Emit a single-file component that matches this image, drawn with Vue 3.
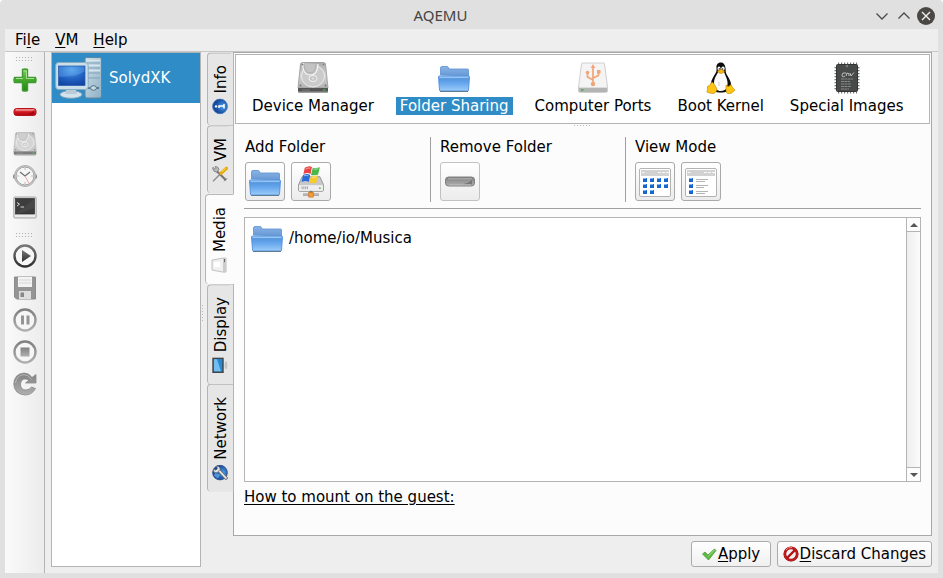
<script setup>
import { ref } from 'vue'

const tools = [
  { id: 'plus', label: 'Add VM' },
  { id: 'minus', label: 'Delete VM' },
  { id: 'hdd', label: 'Create disk image', dim: true },
  { id: 'clock', label: 'Snapshots', dim: true },
  { id: 'terminal', label: 'Emulator control' },
]
const controls = [
  { id: 'play', label: 'Start' },
  { id: 'floppy', label: 'Save' },
  { id: 'pause', label: 'Pause' },
  { id: 'stop', label: 'Stop' },
  { id: 'reset', label: 'Reset' },
]
const tabs = [
  { id: 'info', label: 'Info' },
  { id: 'tools', label: 'VM' },
  { id: 'media', label: 'Media' },
  { id: 'display', label: 'Display' },
  { id: 'network', label: 'Network' },
]
const pages = [
  { id: 'hdd', label: 'Device Manager' },
  { id: 'folder', label: 'Folder Sharing' },
  { id: 'usb', label: 'Computer Ports' },
  { id: 'tux', label: 'Boot Kernel' },
  { id: 'chip', label: 'Special Images' },
]
const folders = ['/home/io/Musica']
const tab = ref('media')
const page = ref('folder')
</script>

<template>
  <div class="window">
    <svg class="defs" aria-hidden="true">
      <defs>
        <linearGradient id="gFold" x2="0" y2="1"><stop offset="0" stop-color="#7db0ea" /><stop offset=".2" stop-color="#5797e0" /><stop offset=".5" stop-color="#68a8ee" /><stop offset="1" stop-color="#9dccf8" /></linearGradient>
        <linearGradient id="gBack" x2="0" y2="1"><stop offset="0" stop-color="#8ab4e4" /><stop offset="1" stop-color="#6698d6" /></linearGradient>
        <linearGradient id="gMetal" x2="0" y2="1"><stop offset="0" stop-color="#a9a9a9" /><stop offset=".5" stop-color="#d4d4d4" /><stop offset="1" stop-color="#b4b4b4" /></linearGradient>
        <linearGradient id="gGreen" x2="0" y2="1"><stop offset="0" stop-color="#7fd060" /><stop offset=".5" stop-color="#45a82c" /><stop offset="1" stop-color="#1f8a12" /></linearGradient>
        <linearGradient id="gRed" x2="0" y2="1"><stop offset="0" stop-color="#f08080" /><stop offset=".5" stop-color="#d01822" /><stop offset="1" stop-color="#b00412" /></linearGradient>
        <linearGradient id="gDark" x2="0" y2="1"><stop offset="0" stop-color="#777" /><stop offset="1" stop-color="#2f2f2f" /></linearGradient>
        <linearGradient id="gGrey" x2="0" y2="1"><stop offset="0" stop-color="#808080" /><stop offset="1" stop-color="#b0b0b0" /></linearGradient>
        <linearGradient id="gCase" x2="1" y2="1"><stop offset="0" stop-color="#cfe0ea" /><stop offset="1" stop-color="#8fb0c4" /></linearGradient>
        <radialGradient id="gScreen" cy=".2" r=".9"><stop offset="0" stop-color="#58a6ec" /><stop offset=".5" stop-color="#2464c4" /><stop offset="1" stop-color="#103f9c" /></radialGradient>
        <radialGradient id="gBall" cy=".7"><stop offset="0" stop-color="#4f9fe6" /><stop offset="1" stop-color="#144a9e" /></radialGradient>
      </defs>

      <symbol id="i-plus" viewBox="0 0 24 24"><path d="M9.500 1.500q2.500-1 5 0V9.500h8q1 2.500 0 5h-8v8q-2.500 1-5 0v-8h-8q-1-2.500 0-5h8z" fill="url(#gGreen)" stroke="#3f9a30" stroke-width="1.400" stroke-linejoin="round" /><path d="M10.500 3h3v7.500h7.500M3 10.500h7" fill="none" stroke="#a5e08c" stroke-width="1" /></symbol>
      <symbol id="i-minus" viewBox="0 0 24 24"><rect x="1" y="8.500" width="22" height="7" rx="2.500" fill="url(#gRed)" stroke="#b5121c" /><path d="M3 10h18" stroke="#f7a6a6" /><path d="M13 14q6-.5 8-4v4z" fill="#8f0510" opacity=".7" /></symbol>
      <symbol id="i-hdd" viewBox="0 0 32 32"><path d="M3.500 2q.3-1.500 2-1.500h21q1.700 0 2 1.500L31 26H1z" fill="url(#gMetal)" stroke="#959595" stroke-width=".8" /><ellipse cx="16" cy="14" rx="11.500" ry="11" fill="#cbcbcb" stroke="#ebebeb" /><path d="M6 1q-1 12 8 12 4 0 6-5 1-4 1-6" fill="#c3c3c3" stroke="#f3f3f3" stroke-width="1.200" /><path d="M7 2q0 9 7 9 3 0 4-4l1-5" fill="none" stroke="#aaa" stroke-width=".8" /><ellipse cx="16" cy="16.500" rx="4" ry="3" fill="#c2c2c2" stroke="#f4f4f4" /><ellipse cx="16" cy="16.500" rx="1.500" ry="1" fill="#e2e2e2" /><circle cx="3.500" cy="23.500" r="1" fill="#777" /><circle cx="28.500" cy="23.500" r="1" fill="#777" /><circle cx="5.500" cy="2.500" r=".8" fill="#777" /><circle cx="26.500" cy="2.500" r=".8" fill="#777" /><path d="M1 26h30v3q0 2-2 2H3q-2 0-2-2z" fill="#555" /><path d="M1 29.500h30q0 1.500-2 1.500H3q-2 0-2-1.500z" fill="#a0a0a0" /><path d="M6 27v2m2-2v2m2-2v2m2-2v2" stroke="#888" stroke-width=".7" /><path d="M26 28h2.500" stroke="#3bb33b" stroke-width="1.300" /></symbol>
      <symbol id="i-clock" viewBox="0 0 24 24"><rect y="10" width="24" height="5" rx="2" fill="#666" /><circle cx="12" cy="12" r="10.500" fill="#c8c8c8" stroke="#989898" /><circle cx="12" cy="12" r="9" fill="#f7f7f7" stroke="#858585" /><path d="M12 4v2m0 12v2m8-8h-2M6 12H4" stroke="#aaa" /><path d="M7 8l5 4 5-4" fill="none" stroke="#444" stroke-width="1.200" /><path d="M12 12l4 7.500" stroke="#f08a8a" /></symbol>
      <symbol id="i-terminal" viewBox="0 0 24 24"><rect x=".8" y="1" width="22.400" height="21" rx="1" fill="#ddd" stroke="#aaa" /><rect x="2.500" y="2.500" width="19" height="15.500" fill="#3d3d3d" stroke="#222" stroke-width=".6" /><path d="M21 3v9L7 17.500H3z" fill="#555" opacity=".45" /><path d="M4 6.500l2.500 1.700L4 10M7.500 11h3.500" fill="none" stroke="#d5d5d5" /><path d="M2 20h20" stroke="#f8f8f8" /></symbol>
      <symbol id="i-play" viewBox="0 0 24 24"><circle cx="12" cy="12" r="10.500" fill="#f6f6f6" stroke="url(#gDark)" stroke-width="2.400" /><path d="M9 6l9 6-9 6z" fill="url(#gDark)" /></symbol>
      <symbol id="i-floppy" viewBox="0 0 24 24"><path d="M1.500 1h21v22H3.500l-2-2z" fill="#959595" stroke="#8b8b8b" /><rect x="5" y="1" width="14" height="10" fill="#f3f3f3" /><path d="M6 4h12M6 7h12" stroke="#d5d5d5" /><rect x="6" y="15" width="12" height="8" fill="#ddd" /><rect x="7.500" y="16.500" width="3.500" height="4.500" fill="#888" /></symbol>
      <symbol id="i-pause" viewBox="0 0 24 24"><circle cx="12" cy="12" r="10.500" fill="#f6f6f6" stroke="url(#gGrey)" stroke-width="2.400" /><path d="M8 7.500h3v9H8zm5.500 0h3v9h-3z" fill="#959595" /></symbol>
      <symbol id="i-stop" viewBox="0 0 24 24"><circle cx="12" cy="12" r="10.500" fill="#f6f6f6" stroke="url(#gGrey)" stroke-width="2.400" /><rect x="7.500" y="7.500" width="9" height="9" fill="url(#gGrey)" /></symbol>
      <symbol id="i-reset" viewBox="0 0 24 24"><path d="M19 5.500Q16 1 11 1 1 2 .8 12 1 22 12 23q7 0 10.500-6.500l-4-1.500q-2 3-6 3-5-.5-5-6 .5-5 5-5 2 0 3 1.500L12.500 11H23V2.500z" fill="url(#gGrey)" stroke="#8a8a8a" stroke-width=".8" /><path d="M2.500 11Q3.500 3 11 2.700q4.500 0 7.500 4.800" fill="none" stroke="#b8b8b8" /></symbol>

      <symbol id="i-computer" viewBox="0 0 48 42"><path d="M30 2q0-1.500 1.500-1.500H45q1.500 0 1.500 1.500v37q0 2-2 2H32q-2 0-2-2z" fill="url(#gCase)" stroke="#5f879e" /><path d="M32 6h13M32 11h13M32 16h13M32 21h13" stroke="#7fa3b8" /><path d="M32 3.500h13M32 8.500h13M32 13.500h13" stroke="#d5e6ef" stroke-width="1.500" /><ellipse cx="38.500" cy="31" rx="3" ry="2.300" fill="#c5dbe6" stroke="#4e7084" /><path d="M33 31h2m7 0h2" stroke="#416378" stroke-width="1.500" /><ellipse cx="16" cy="37.500" rx="11" ry="3.800" fill="#d2e3ed" stroke="#7fa2b6" /><path d="M12 30h8l2 7H10z" fill="#b7ccd8" /><rect x=".7" y="5.500" width="32.500" height="27" rx="3" fill="#cbdfea" stroke="#88acc0" /><rect x="3.500" y="9" width="26.500" height="19.500" fill="url(#gScreen)" stroke="#2459a8" stroke-width=".7" /><path d="M4 9.500h25.500v5q-10 6-25.500 5z" fill="#66adf0" opacity=".4" /></symbol>

      <symbol id="i-info" viewBox="0 0 16 16"><circle cx="8" cy="8" r="7.400" fill="url(#gBall)" stroke="#3c70b4" stroke-width=".8" /><circle cx="8" cy="4" r="1.200" fill="#fff" /><path d="M6.500 7h2v5M6 12h4.500" fill="none" stroke="#fff" stroke-width="1.500" /></symbol>
      <symbol id="i-tools" viewBox="0 0 16 16"><path d="M2 14L12 4" stroke="#777" stroke-width="2.200" /><path d="M1 12l3 3M11 2q3-2 4-1l-2 2 1 1 2-1q0 3-3 4l-3-2z" fill="#bbb" stroke="#777" stroke-width=".8" /><path d="M1 1l8 8" stroke="#888" stroke-width="1.300" /><path d="M9 9l5 5.500" stroke="#e8ab0b" stroke-width="3.200" stroke-linecap="round" /><path d="M10 9.500l4 4" stroke="#ffe169" /></symbol>
      <symbol id="i-media" viewBox="0 0 16 16"><path d="M3 1h10l2 11v3H1v-3z" fill="#f0f0f0" stroke="#b3b3b3" stroke-width=".8" /><path d="M1 12h14v3H1z" fill="#ccc" /><path d="M6 3h5v6H6z" fill="#fff" /><path d="M11 13.500h3" stroke="#666" /></symbol>
      <symbol id="i-display" viewBox="0 0 16 16"><path d="M6 11h4l2 4H4z" fill="#ddd" /><ellipse cx="8" cy="14" rx="4" ry="1.200" fill="#c4c4c4" /><rect x="1" y="1" width="14" height="10" fill="#2689d3" stroke="#444" stroke-width="1.400" /><path d="M2 2h12v3L2 9z" fill="#74bdf0" /></symbol>
      <symbol id="i-network" viewBox="0 0 16 16"><circle cx="8" cy="8" r="7.300" fill="url(#gBall)" stroke="#34528e" /><path d="M2 6l3-4 3 1-2 5z" fill="#77bff2" opacity=".6" /><path d="M10 7L1.500 15" stroke="#666" stroke-width="3.200" /><path d="M10 7L2 14.500" stroke="#e5e5e5" stroke-width="1.800" /><path d="M14.500 4.500l-2.500 1-1.500-1.500 1-2.500q-4-.5-3.500 3.500L11 8q3.500.500 3.500-3.500z" fill="#e5e5e5" stroke="#666" stroke-width=".7" /></symbol>

      <symbol id="i-folder" viewBox="0 0 32 32"><path d="M2.500 13V6q0-1.500 1.500-1.500h5q1 0 1.500 1L11 7h18.500q1 0 1 1v6z" fill="url(#gBack)" stroke="#5c91d2" stroke-width=".8" /><path d="M.5 15q0-1 1-1h29q1 0 1 1L30.500 28q0 1-1 1h-27q-1 0-1-1z" fill="url(#gFold)" stroke="#4f8fdb" stroke-width=".9" /><path d="M1.500 15.200h29" stroke="#a9d0fa" /><path d="M2 29.500h28" stroke="#627c94" /></symbol>
      <symbol id="i-usb" viewBox="0 0 32 32"><path d="M4.500 2q0-1 1-1h21q1 0 1 1L30.500 25v4q0 1.500-2 1.500h-25q-2 0-2-1.500v-4z" fill="#f4f4f4" stroke="#cfcfcf" /><path d="M2 26h28v4H2z" fill="#b4b4b4" /><path d="M2 25.500h28" stroke="#ddd" /><path d="M4 28h2.500" stroke="#37b72c" stroke-width="1.500" /><path d="M16 23V5M16 18l-5.500-3v-5M16 16l5.500-2.500V9" fill="none" stroke="#f1a477" stroke-width="1.700" /><circle cx="16" cy="22" r="2.200" fill="#f1a477" /><circle cx="10.500" cy="10.500" r="1.800" fill="#f1a477" /><path d="M16 2l2.300 4h-4.600zM20 8h3.500v3.500H20z" fill="#f1a477" /></symbol>
      <symbol id="i-tux" viewBox="0 0 32 32"><path d="M16 .5c-3.500 0-5 2.500-4.500 6 .5 4-1.500 5-3.500 9s-3 7-2 11c1 3 5 4 10 4s9-2 10-5c1-5-2-9-4-12.500s-1-4-1.500-7C20 2.500 18.500.5 16 .5z" fill="#0b0b0b" /><path d="M13 10c-1 3-4 6-4 11 0 6 3 8 7 8 5 0 7-4 6.500-9-.4-4-2.500-7-3.500-10z" fill="#fafafa" /><ellipse cx="14" cy="6.500" rx="1.500" ry="2" fill="#fff" /><ellipse cx="18" cy="6.500" rx="1.700" ry="2" fill="#fff" /><circle cx="14.300" cy="7" r=".7" /><circle cx="17.700" cy="7" r=".7" /><path d="M12.500 9l3.500-1.800L19.500 9q-1 2.500-3.500 2.500T12.500 9z" fill="#f3b616" stroke="#bc7b00" stroke-width=".5" /><path d="M14 20v4" stroke="#ccc" /><path d="M7 20q2 1 5 7-1 5-5 4.500-2-.5-4.500-1-1.500-1 0-3-1-4 2-4zM21 23q2 3 5-.5 1 3 3.500 5 1 1-1 2-2 2.500-5.500 2.300-2-.5-2-4z" fill="#ffc414" stroke="#b98600" stroke-width=".6" /></symbol>
      <symbol id="i-chip" viewBox="0 0 32 32"><path d="M7 1.500h19M7 30.500h19" stroke="#777" stroke-width="2" stroke-dasharray="1.200 1.800" /><path d="M4.500 5v23M27.500 5v23" stroke="#777" stroke-width="2" stroke-dasharray="1.200 1.800" /><rect x="5.500" y="2.500" width="21" height="27" rx="1" fill="#474a49" stroke="#343635" /><circle cx="16" cy="4" r="1.300" fill="#777" /><path d="M15 11q-4-1-4 2t3 1M15 14l1-3q3 0 2 3m1-3l1 3 3-3.500" fill="none" stroke="#ccc" stroke-width=".9" /><path d="M10 17h12M10 19.500h9M10 22h10M10 24.500h10M10 27h8" stroke="#999" stroke-width=".8" stroke-dasharray="3 .4" /></symbol>
      <symbol id="i-share" viewBox="0 0 32 36"><path d="M6 12h20l4 9v6q0 1.500-1.500 1.500h-25Q2 28.500 2 27v-6z" fill="#c8c8cb" stroke="#929292" /><path d="M2.500 21.500h27V28h-27z" fill="#eeeef0" /><path d="M6 23v3m2-3v3m2-3v3m2-3v3" stroke="#999" /><circle cx="26" cy="25" r="1" fill="#5dbc4f" /><path d="M16 28v4" stroke="#777" stroke-width="3" /><path d="M7 32h18" stroke="#999" stroke-width="3" /><path d="M7 31.500h18" stroke="#e2e2e2" /><rect x="13.500" y="29.500" width="5" height="5.500" fill="#f79b37" stroke="#c56611" stroke-width=".7" /><path d="M9 2q4.500-3 8-1l-1.500 8q-3.500-2-8 0z" fill="#ea4245" /><path d="M18 2q3.500 1 8-.5L24 9.500q-3.500 1.500-8 .5z" fill="#4bb749" /><path d="M7 10q4.500-2 8 0l-1.500 8q-3.500-2-8 0z" fill="#286bd9" /><path d="M16 11q3.500 1 8-.5L22 18.500q-3.500 2-8 0z" fill="#f7c92e" /><path d="M10 3.500q3-2 5-1M19 3.500q3 .5 5-.5M8 11q3-1 5 0M17 12.500q3 .5 5-.5" fill="none" stroke="#fff" opacity=".55" /></symbol>
      <symbol id="i-remove" viewBox="0 0 32 32"><rect x="1.500" y="11" width="29" height="9" rx="3" fill="url(#gGrey)" stroke="#808080" /><path d="M4 12.800h24" stroke="#aaa" stroke-width="1.200" /><path d="M17 18.500q8-1 11-5v5z" fill="#777" /><path d="M5 18.800h22" stroke="#bbb" /></symbol>
      <symbol id="i-frame" viewBox="0 0 32 32"><rect x=".5" y="2.500" width="31" height="28" rx="1.500" fill="#fff" stroke="#b3b3b3" /><path d="M2 4h28v6H2z" fill="#d2d2d2" /><path d="M3 6.500h2.500M19 6.500h3m1 0h3m1 0h3" stroke="#f8f8f8" /></symbol>
      <symbol id="i-grid" viewBox="0 0 32 32"><use href="#i-frame" /><path d="M4 12h4v4H4zm7 0h4v4h-4zm7 0h4v4h-4zm7 0h4v4h-4zM4 18h4v4H4zm7 0h4v4h-4zm7 0h4v4h-4zm7 0h4v4h-4zM4 24h4v4H4zm7 0h4v4h-4z" fill="#1765cf" /><path d="M4 12.500h3m4 0h3m4 0h3m4 0h3M4 18.500h3m4 0h3m4 0h3m4 0h3M4 24.500h3m4 0h3" stroke="#80b6f4" /></symbol>
      <symbol id="i-list" viewBox="0 0 32 32"><use href="#i-frame" /><path d="M4 12h4v4H4zm0 6h4v4H4zm0 6h4v4H4z" fill="#1765cf" /><path d="M4 12.500h3M4 18.500h3M4 24.500h3" stroke="#80b6f4" /><path d="M11 13.500h12M11 15.500h9M11 19.500h12M11 21.500h8M11 25.500h12M11 27.500h9" stroke="#b5b5b5" /></symbol>
      <symbol id="i-check" viewBox="0 0 16 16"><path d="M1.500 8L4 6l3 3 6.500-6L15 4.500 7.500 14z" fill="#5dba41" stroke="#4b9b3b" stroke-width=".8" /><path d="M7 10.500L13.500 4" stroke="#9de186" /></symbol>
      <symbol id="i-forbid" viewBox="0 0 16 16"><circle cx="8" cy="8" r="6.200" fill="#f2f2f2" stroke="#8f1515" stroke-width="2.800" /><circle cx="8" cy="8" r="6.200" fill="none" stroke="#c61a1a" stroke-width="2" /><path d="M4 12l8-8" stroke="#b51212" stroke-width="2.400" /><path d="M3 4q2-3 6-2.500" fill="none" stroke="#ef8b8b" /></symbol>
    </svg>

    <header class="titlebar">
      <h1>AQEMU</h1>
      <div class="wincontrols">
        <button aria-label="Minimize"><svg viewBox="0 0 18 18"><path d="M3.500 6.500L9 12l5.500-5.500" fill="none" stroke="#4a4a45" stroke-width="1.300" /></svg></button>
        <button aria-label="Maximize"><svg viewBox="0 0 18 18"><path d="M3.500 11.500L9 6l5.500 5.500" fill="none" stroke="#4a4a45" stroke-width="1.300" /></svg></button>
        <button aria-label="Close"><svg viewBox="0 0 18 18"><circle cx="9" cy="9" r="9" fill="#4a4843" /><path d="M5 5l8 8m0-8l-8 8" stroke="#eee" stroke-width="1.400" /></svg></button>
      </div>
    </header>

    <div class="client">
      <nav class="menubar" aria-label="Menu">
        <button>Fi<u>l</u>e</button>
        <button><u>V</u>M</button>
        <button><u>H</u>elp</button>
      </nav>

      <div class="body">
        <aside class="toolbar">
          <span class="grip"></span>
          <button v-for="t in tools" :key="t.id" :aria-label="t.label" :class="{ dim: t.dim }"><svg><use :href="'#i-' + t.id" /></svg></button>
          <span class="grip"></span>
          <button v-for="t in controls" :key="t.id" :aria-label="t.label"><svg><use :href="'#i-' + t.id" /></svg></button>
        </aside>

        <ul class="machines">
          <li class="selected"><svg><use href="#i-computer" /></svg>SolydXK</li>
        </ul>
        <span class="splitter"></span>

        <main class="content">
          <div class="tabbed">
            <div class="tabs" role="tablist">
              <button v-for="t in tabs" :key="t.id" role="tab" :aria-selected="tab === t.id" :class="{ active: tab === t.id }" @click="tab = t.id">
                <svg><use :href="'#i-' + t.id" /></svg><span>{{ t.label }}</span>
              </button>
            </div>

            <section class="panel">
              <div class="pages">
                <button v-for="p in pages" :key="p.id" :class="{ active: page === p.id }" @click="page = p.id">
                  <svg><use :href="'#i-' + p.id" /></svg><span>{{ p.label }}</span>
                </button>
              </div>
              <span class="hsplit"></span>

              <div class="sharing">
                <div class="groups">
                  <div class="group">
                    <h2>Add Folder</h2>
                    <div class="row">
                      <button class="iconbtn" aria-label="Add folder"><svg><use href="#i-folder" /></svg></button>
                      <button class="iconbtn" aria-label="Add network share"><svg><use href="#i-share" /></svg></button>
                    </div>
                  </div>
                  <div class="group">
                    <h2>Remove Folder</h2>
                    <div class="row">
                      <button class="iconbtn off" aria-label="Remove folder" disabled><svg><use href="#i-remove" /></svg></button>
                    </div>
                  </div>
                  <div class="group last">
                    <h2>View Mode</h2>
                    <div class="row">
                      <button class="iconbtn" aria-label="Icon view"><svg><use href="#i-grid" /></svg></button>
                      <button class="iconbtn" aria-label="List view"><svg><use href="#i-list" /></svg></button>
                    </div>
                  </div>
                </div>

                <div class="listbox">
                  <ul>
                    <li v-for="f in folders" :key="f"><svg><use href="#i-folder" /></svg>{{ f }}</li>
                  </ul>
                  <div class="scrollbar">
                    <button aria-label="Scroll up"><svg viewBox="0 0 8 4"><path d="M0 4l4-4 4 4z" fill="#555" /></svg></button>
                    <button aria-label="Scroll down"><svg viewBox="0 0 8 4"><path d="M0 0h8L4 4z" fill="#555" /></svg></button>
                  </div>
                </div>
                <a class="howto" href="#">How to mount on the guest:</a>
              </div>
            </section>
          </div>

          <footer class="actions">
            <button class="apply"><svg><use href="#i-check" /></svg><span><u>A</u>pply</span></button>
            <button><svg><use href="#i-forbid" /></svg><span><u>D</u>iscard Changes</span></button>
          </footer>
        </main>
      </div>
    </div>
  </div>
</template>

<style>
body {
  margin: 0;
  background: #fff;
}
</style>

<style scoped>
* {
  box-sizing: border-box;
}
.window {
  display: flex;
  flex-direction: column;
  min-height: 100vh;
  padding: 0 5px 5px;
  background: #e0e0e0;
  border-radius: 4px 4px 0 0;
  color: #000;
  font: 15px/18px "DejaVu Sans", sans-serif;
}
.defs {
  position: absolute;
  width: 0;
  height: 0;
}
button {
  margin: 0;
  padding: 0;
  border: 0;
  background: none;
  color: inherit;
  font: inherit;
}
svg {
  display: block;
  flex: none;
}
ul {
  margin: 0;
  padding: 0;
  list-style: none;
}
u {
  text-underline-offset: 2px;
}
.titlebar {
  display: grid;
  grid-template-columns: 1fr auto 1fr;
  align-items: center;
  height: 29px;
}
h1 {
  grid-column: 2;
  margin: 0;
  padding-right: 62px;
  color: #444;
  font: 15px/20px "Noto Sans", sans-serif;
}
.wincontrols {
  display: flex;
  justify-self: end;
  gap: 4px;
  padding: 2px 3px 0 0;
}
.wincontrols svg {
  width: 18px;
  height: 18px;
}
.client {
  display: flex;
  flex: 1;
  flex-direction: column;
  background: #eee;
}
.menubar {
  display: flex;
  gap: 15px;
  height: 23px;
  padding: 0 10px;
  border-bottom: 1px solid #c6c6c6;
}
.body {
  display: flex;
  flex: 1;
}
.toolbar {
  display: flex;
  flex-direction: column;
  align-items: center;
  width: 40px;
  border-right: 1px solid #b4b4b4;
  background: linear-gradient(90deg, #fafafa, #ececec);
}
.toolbar button {
  margin-bottom: 8px;
}
.toolbar svg {
  width: 24px;
  height: 24px;
}
.dim {
  opacity: 0.75;
}
.grip {
  width: 17px;
  height: 5px;
  margin: 5px 0 6px;
  background: conic-gradient(from 270deg at 1px 1px, #b0b0b0 90deg, transparent 0) 0 0 / 3px 3px;
}
.machines {
  flex: none;
  width: 150px;
  margin: 0 0 6px 6px;
  border: 1px solid #b4b4b4;
  background: #fff;
}
.machines li {
  display: flex;
  align-items: center;
  gap: 6px;
  height: 50px;
  padding-left: 3px;
}
.machines .selected {
  background: #308cc6;
  color: #fff;
}
.machines svg {
  width: 48px;
  height: 42px;
}
.splitter {
  align-self: center;
  width: 4px;
  height: 16px;
  background: conic-gradient(from 270deg at 1px 1px, #b8b8b8 90deg, transparent 0) 1px 0 / 3px 3px;
}
.content {
  display: flex;
  flex: 1;
  flex-direction: column;
  gap: 5px;
  min-width: 0;
  padding: 0 6px 6px 0;
}
.tabbed {
  display: flex;
  flex: 1;
}
.tabs {
  z-index: 1;
  display: flex;
  flex-direction: column;
  align-items: flex-end;
  width: 29px;
  margin-right: -1px;
}
.tabs button {
  display: flex;
  align-items: center;
  gap: 5px;
  width: 27px;
  padding: 11px 0 12px;
  border: 1px solid #b4b4b4;
  border-top: 0;
  border-radius: 0 4px 4px 0;
  background: #e6e6e6;
  writing-mode: vertical-rl;
  transform: rotate(180deg);
}
.tabs button.active {
  width: 29px;
  border-left-color: #fcfcfc;
  background: #fcfcfc;
}
.tabs svg {
  width: 16px;
  height: 16px;
  transform: rotate(90deg);
}
.panel {
  display: flex;
  flex: 1;
  flex-direction: column;
  min-width: 0;
  padding: 1px;
  border: 1px solid #a8a8a8;
  background: #fcfcfc;
}
.pages {
  display: flex;
  gap: 18px;
  padding: 7px 12px 8px;
  border: 1px solid #b4b4b4;
  background: #fff;
}
.pages button {
  display: flex;
  flex-direction: column;
  align-items: center;
  gap: 3px;
}
.pages svg {
  width: 32px;
  height: 32px;
}
.pages span {
  padding: 0 4px;
  white-space: nowrap;
}
.pages .active span {
  background: #308cc6;
  color: #fff;
}
.hsplit {
  align-self: center;
  width: 17px;
  height: 3px;
  background: conic-gradient(from 270deg at 1px 1px, #b8b8b8 90deg, transparent 0) 0 1px / 3px 3px;
}
.sharing {
  display: flex;
  flex: 1;
  flex-direction: column;
  padding: 10px 9px 28px;
}
.groups {
  display: flex;
  padding-bottom: 6px;
  border-bottom: 1px solid #a0a0a0;
}
.group {
  width: 195px;
  padding: 1px 0 0 9px;
  border-left: 1px solid #a0a0a0;
}
.group:first-child {
  width: 186px;
  padding-left: 1px;
  border-left: 0;
}
.group.last {
  flex: 1;
}
h2 {
  margin: 0 0 6px;
  font: inherit;
}
.row {
  display: flex;
  gap: 6px;
  padding-bottom: 1px;
}
.iconbtn {
  display: grid;
  place-items: center;
  width: 40px;
  height: 39px;
  border: 1px solid #a9a9a9;
  border-radius: 3px;
  background: linear-gradient(#fff, #ececec);
}
.iconbtn.off {
  border-color: #c2c2c2;
}
.iconbtn svg {
  width: 32px;
  height: 32px;
}
.listbox {
  display: flex;
  flex: 1;
  margin-top: 8px;
  border: 1px solid #b4b4b4;
  background: #fff;
}
.listbox ul {
  flex: 1;
  padding: 4px 6px;
}
.listbox li {
  display: flex;
  align-items: center;
  gap: 6px;
}
.listbox li svg {
  width: 32px;
  height: 32px;
}
.scrollbar {
  display: flex;
  flex-direction: column;
  justify-content: space-between;
  width: 14px;
  border-left: 1px solid #b4b4b4;
  background: linear-gradient(90deg, #eee, #fcfcfc);
}
.scrollbar button {
  display: grid;
  place-items: center;
  height: 14px;
  border-bottom: 1px solid #b4b4b4;
  background: #fcfcfc;
}
.scrollbar button:last-child {
  border-top: 1px solid #b4b4b4;
  border-bottom: 0;
}
.scrollbar svg {
  width: 8px;
  height: 4px;
}
.howto {
  align-self: flex-start;
  margin-top: 6px;
  color: #000;
  text-underline-offset: 2px;
}
.actions {
  display: flex;
  justify-content: flex-end;
  gap: 6px;
}
.actions button {
  display: flex;
  align-items: center;
  justify-content: center;
  gap: 1px;
  height: 26px;
  padding: 0 5px;
  border: 1px solid #ababab;
  border-radius: 3px;
  background: linear-gradient(#fff, #f0f0f0);
}
.actions .apply {
  min-width: 80px;
}
.actions svg {
  width: 16px;
  height: 16px;
}
</style>
